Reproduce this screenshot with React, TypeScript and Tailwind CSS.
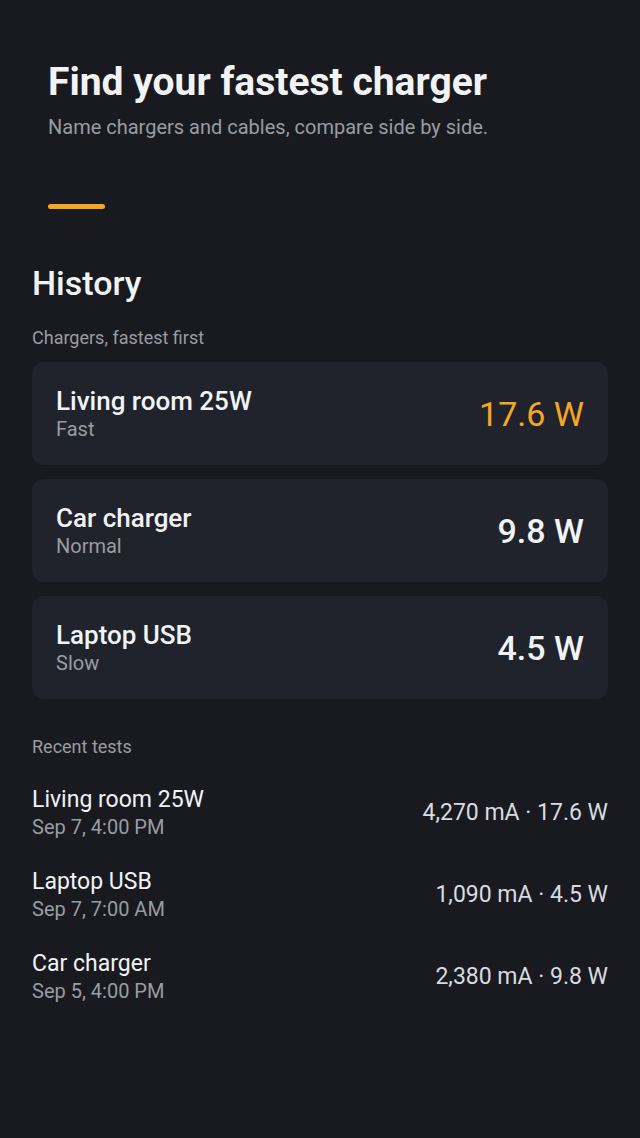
const chargers = [
  { name: "Living room 25W", speed: "Fast", watts: "17.6 W", top: true },
  { name: "Car charger", speed: "Normal", watts: "9.8 W", top: false },
  { name: "Laptop USB", speed: "Slow", watts: "4.5 W", top: false },
];

const tests = [
  { name: "Living room 25W", when: "Sep 7, 4:00 PM", reading: "4,270 mA · 17.6 W" },
  { name: "Laptop USB", when: "Sep 7, 7:00 AM", reading: "1,090 mA · 4.5 W" },
  { name: "Car charger", when: "Sep 5, 4:00 PM", reading: "2,380 mA · 9.8 W" },
];

export default function App() {
  return (
    <main className="min-h-[1138px] bg-[#181a20] font-['Roboto',sans-serif] text-[#f2f3f5]">
      <header className="px-12 pt-[60px]">
        <h1 className="text-[39px] font-bold leading-[44px]">Find your fastest charger</h1>
        <p className="mt-[10px] text-[20px] leading-[26px] text-[#9a9ca3]">
          Name chargers and cables, compare side by side.
        </p>
        <div className="mt-[64px] h-[5px] w-[57px] rounded-full bg-[#f5a623]" />
      </header>

      <section className="px-8 pt-[54px]">
        <h2 className="text-[34px] font-medium leading-10">History</h2>
        <p className="mt-[23px] text-[18px] leading-6 text-[#9a9ca3]">Chargers, fastest first</p>

        <div className="mt-[12px] flex flex-col gap-[14px]">
          {chargers.map((c) => (
            <div
              key={c.name}
              className="flex h-[103px] items-center justify-between rounded-xl bg-[#20232b] px-6"
            >
              <div>
                <p className="text-[26px] font-medium leading-[30px]">{c.name}</p>
                <p className="text-[20px] leading-[26px] text-[#9a9ca3]">{c.speed}</p>
              </div>
              {c.top ? (
                <p className="text-[34px] leading-10 text-[#f5a623]">{c.watts}</p>
              ) : (
                <p className="text-[34px] font-medium leading-10">{c.watts}</p>
              )}
            </div>
          ))}
        </div>

        <p className="mt-[36px] text-[18px] leading-6 text-[#9a9ca3]">Recent tests</p>

        <div className="mt-[27px] flex flex-col gap-[28px]">
          {tests.map((t) => (
            <div key={t.name} className="flex items-center justify-between">
              <div>
                <p className="text-[23px] leading-7">{t.name}</p>
                <p className="text-[20px] leading-[26px] text-[#9a9ca3]">{t.when}</p>
              </div>
              <p className="text-[23px] leading-7 text-[#d9dbe0]">{t.reading}</p>
            </div>
          ))}
        </div>
      </section>
    </main>
  );
}
